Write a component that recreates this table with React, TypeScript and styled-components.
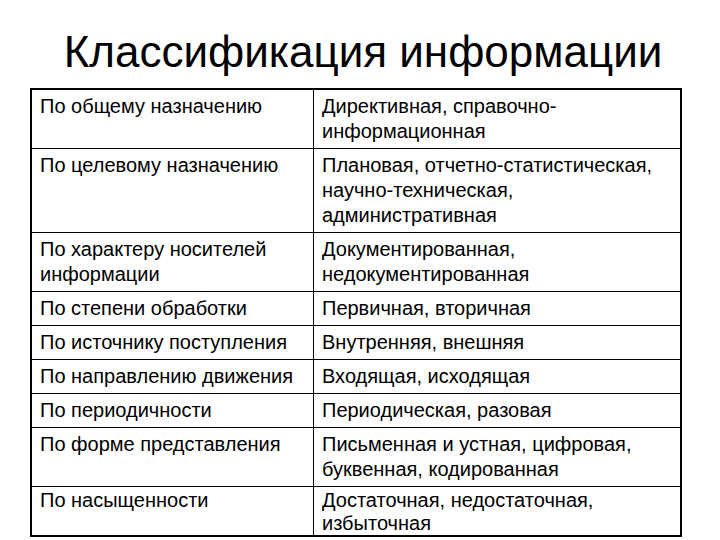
import React from "react";
import styled, { createGlobalStyle } from "styled-components";

const GlobalStyle = createGlobalStyle`
  html, body {
    margin: 0;
    padding: 0;
    background: #ffffff;
    overflow: hidden;
  }
  body {
    font-family: "Liberation Sans", Arial, sans-serif;
    color: #000000;
  }
`;

const Slide = styled.div`
  width: 720px;
  height: 540px;
  background: #ffffff;
  overflow: hidden;
`;

const Title = styled.h1`
  margin: 0;
  padding: 28px 0 12px 6px;
  font-size: 44px;
  font-weight: normal;
  line-height: 48px;
  text-align: center;
  color: #000000;
`;

const Table = styled.div`
  margin-left: 30px;
  width: 652px;
  box-sizing: border-box;
  border: 2px solid #000000;
`;

const Row = styled.div<{ $first?: boolean }>`
  display: grid;
  grid-template-columns: 281px 1fr;
  border-top: ${(p) => (p.$first ? "none" : "1px solid #000000")};
`;

const Cell = styled.div<{ $right?: boolean; $compact?: boolean }>`
  padding: ${(p) => (p.$compact ? "2px 8px 0" : "4px 8px")};
  font-size: 20px;
  line-height: ${(p) => (p.$compact ? "23px" : "25px")};
  border-left: ${(p) => (p.$right ? "1px solid #000000" : "none")};
`;

const rows: [string[], string[]][] = [
  [["По общему назначению"], ["Директивная, справочно-", "информационная"]],
  [
    ["По целевому назначению"],
    ["Плановая, отчетно-статистическая,", "научно-техническая,", "административная"],
  ],
  [["По характеру носителей", "информации"], ["Документированная,", "недокументированная"]],
  [["По степени обработки"], ["Первичная, вторичная"]],
  [["По источнику поступления"], ["Внутренняя, внешняя"]],
  [["По направлению движения"], ["Входящая, исходящая"]],
  [["По периодичности"], ["Периодическая, разовая"]],
  [["По форме представления"], ["Письменная и устная, цифровая,", "буквенная, кодированная"]],
  [["По насыщенности"], ["Достаточная, недостаточная,", "избыточная"]],
];

const Lines: React.FC<{ lines: string[] }> = ({ lines }) => (
  <>
    {lines.map((l, i) => (
      <React.Fragment key={i}>
        {i > 0 && <br />}
        {l}
      </React.Fragment>
    ))}
  </>
);

export default function App() {
  return (
    <>
      <GlobalStyle />
      <Slide>
        <Title>Классификация информации</Title>
        <Table>
          {rows.map(([left, right], i) => {
            const compact = i === rows.length - 1;
            return (
              <Row key={i} $first={i === 0}>
                <Cell $compact={compact}>
                  <Lines lines={left} />
                </Cell>
                <Cell $right $compact={compact}>
                  <Lines lines={right} />
                </Cell>
              </Row>
            );
          })}
        </Table>
      </Slide>
    </>
  );
}
